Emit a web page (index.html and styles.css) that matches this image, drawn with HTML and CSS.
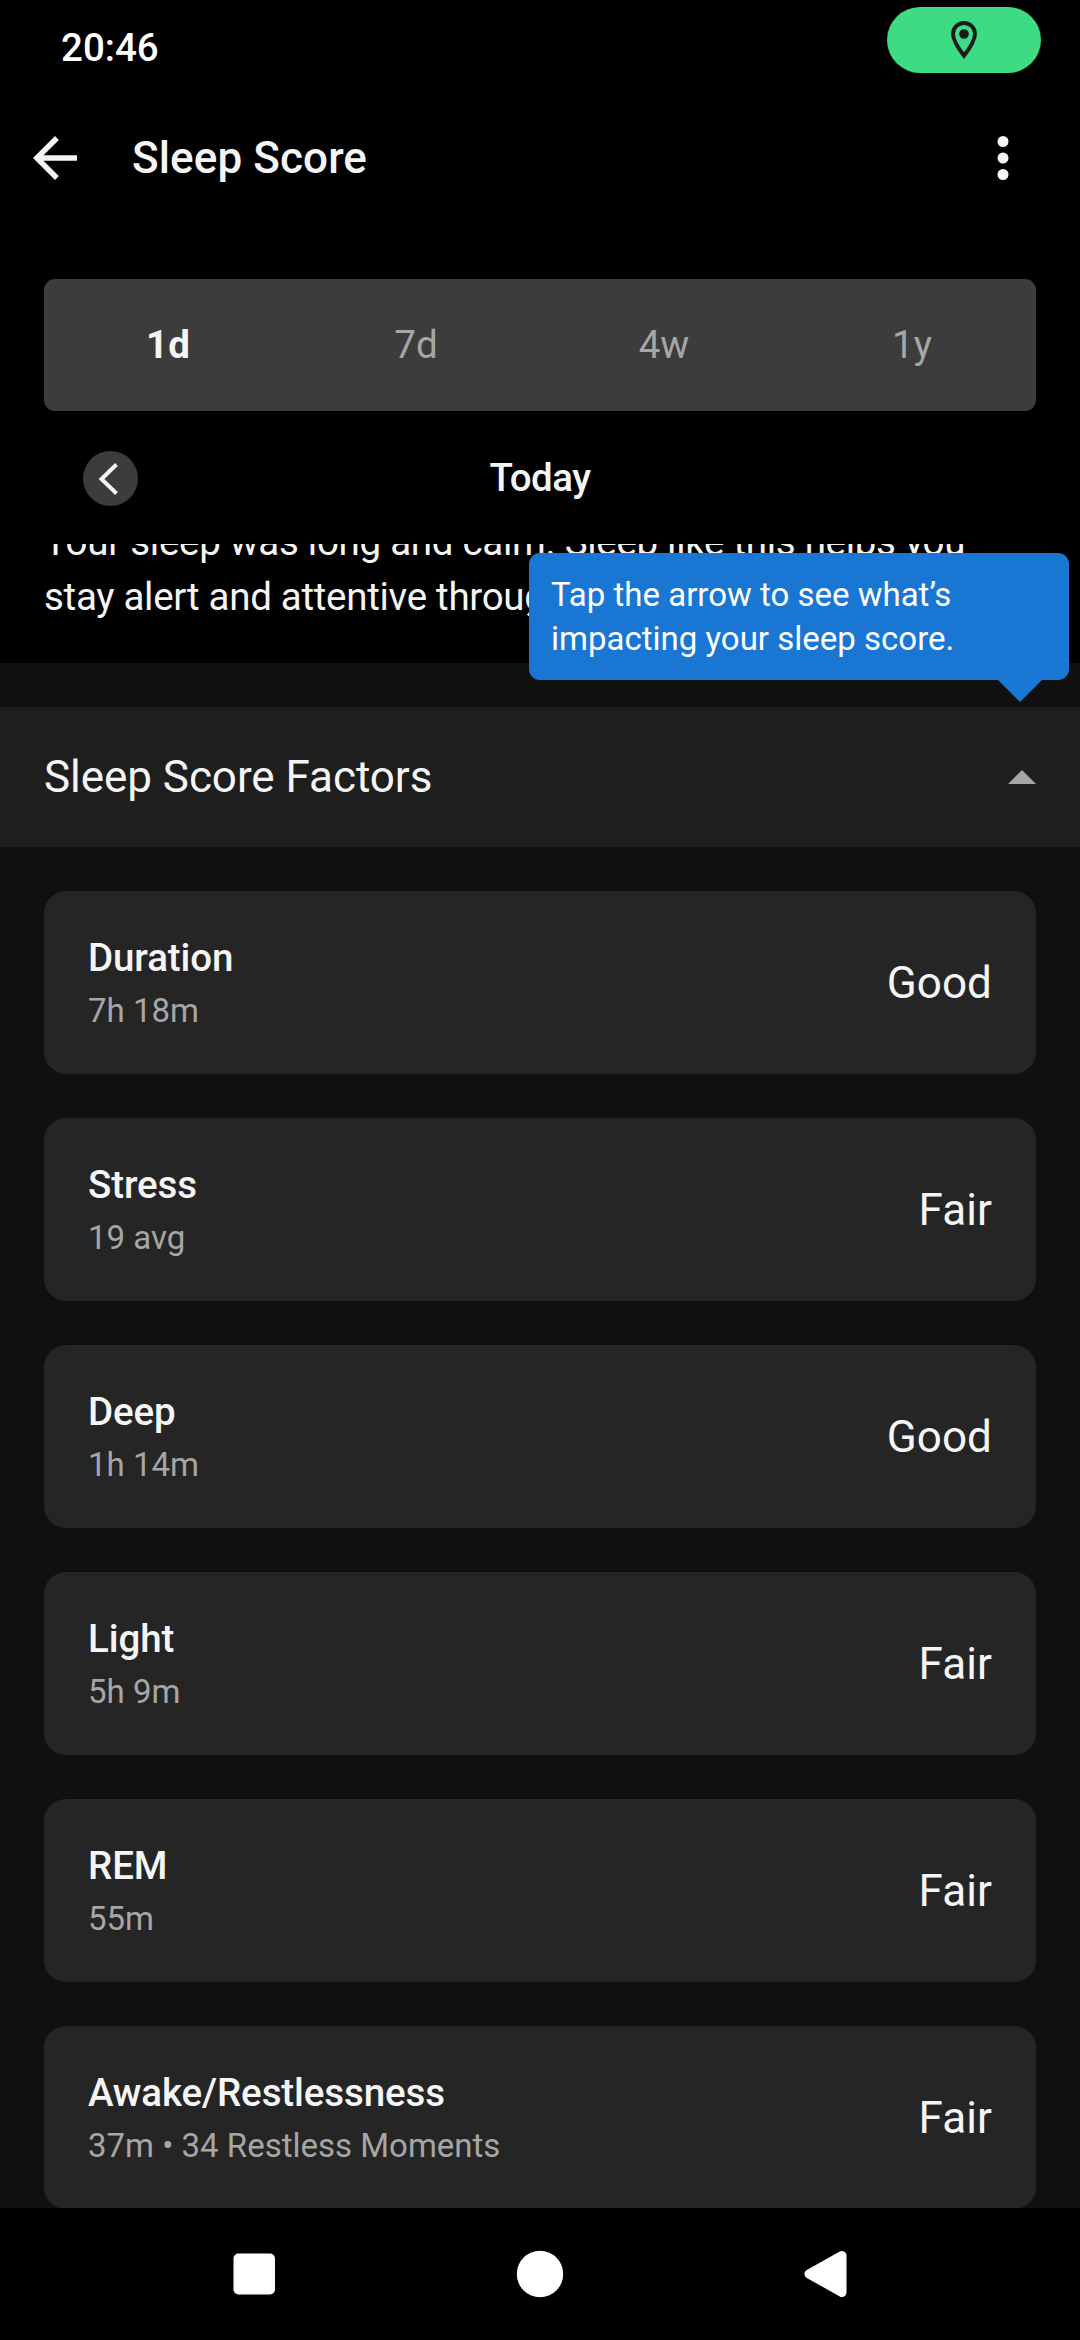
FILE: index.html
```html
<!DOCTYPE html>
<html lang="en">
<head>
<meta charset="utf-8">
<title>Sleep Score</title>
<link rel="stylesheet" href="styles.css">
</head>
<body>
<div class="screen">
  <div class="status-bar">
    <span class="clock">20:46</span>
    <span class="location-pill">
      <svg class="pin" viewBox="0 0 26 38" width="26" height="38">
        <path d="M13 2C6.9 2 2 6.9 2 13C2 20 7.5 27.5 13 34.7C18.500 27.500 24 20 24 13C24 6.900 19.100 2 13 2Z" fill="none" stroke="#1b1b1f" stroke-width="3.900"/>
        <circle cx="13" cy="13" r="4.800" fill="#1b1b1f"/>
      </svg>
    </span>
  </div>

  <header class="app-bar">
    <svg class="back" viewBox="0 0 24 24" width="66" height="66"><path d="M20 11H7.830l5.590-5.590L12 4l-8 8 8 8 1.410-1.410L7.830 13H20z" fill="#f5f5f5"/></svg>
    <h1 class="title">Sleep Score</h1>
    <svg class="more" viewBox="0 0 24 24" width="66" height="66"><g fill="#f5f5f5"><circle cx="12" cy="6" r="2"/><circle cx="12" cy="12" r="2"/><circle cx="12" cy="18" r="2"/></g></svg>
  </header>

  <nav class="ranges">
    <span class="range active">1d</span>
    <span class="range">7d</span>
    <span class="range">4w</span>
    <span class="range">1y</span>
  </nav>

  <div class="date-row">
    <span class="prev">
      <svg viewBox="0 0 55 55" width="55" height="55"><path d="M33.500 13.500L18.500 28L33.500 42.500" fill="none" stroke="#f5f5f5" stroke-width="4"/></svg>
    </span>
    <span class="date">Today</span>
  </div>

  <main class="content">
    <div class="summary">
      <p class="summary-text">Your sleep was long and calm. Sleep like this helps you<br>stay alert and attentive throughout the day.</p>
    </div>
    <section class="section-header">
      <h2 class="section-title">Sleep Score Factors</h2>
      <svg class="caret" viewBox="0 0 28 14" width="28" height="14"><path d="M0 14L14 0L28 14Z" fill="#a6a6a6"/></svg>
      <div class="tooltip">Tap the arrow to see what’s<br>impacting your sleep score.</div>
    </section>
    <div class="cards">
      <div class="card"><div class="info"><span class="label">Duration</span><span class="detail">7h 18m</span></div><span class="rating">Good</span></div>
      <div class="card"><div class="info"><span class="label">Stress</span><span class="detail">19 avg</span></div><span class="rating">Fair</span></div>
      <div class="card"><div class="info"><span class="label">Deep</span><span class="detail">1h 14m</span></div><span class="rating">Good</span></div>
      <div class="card"><div class="info"><span class="label">Light</span><span class="detail">5h 9m</span></div><span class="rating">Fair</span></div>
      <div class="card"><div class="info"><span class="label">REM</span><span class="detail">55m</span></div><span class="rating">Fair</span></div>
      <div class="card"><div class="info"><span class="label">Awake/Restlessness</span><span class="detail">37m • 34 Restless Moments</span></div><span class="rating">Fair</span></div>
    </div>
  </main>

  <footer class="nav-bar">
    <svg viewBox="0 0 48 48" width="48" height="48"><rect x="3.500" y="3.500" width="41.500" height="41" rx="5" fill="#fff"/></svg>
    <svg viewBox="0 0 48 48" width="48" height="48"><circle cx="24" cy="24" r="23.200" fill="#fff"/></svg>
    <svg viewBox="0 0 48 48" width="48" height="48"><path d="M7 24L40 5.500V42.500Z" fill="#fff" stroke="#fff" stroke-width="9" stroke-linejoin="round"/></svg>
  </footer>
</div>
</body>
</html>
```
FILE: styles.css
```css
* { box-sizing: border-box; margin: 0; padding: 0; }
body { background: #000; font-family: Roboto, sans-serif; color: #f5f5f5; }
svg { display: block; flex: none; }

.screen {
  width: 1080px;
  height: 2340px;
  display: flex;
  flex-direction: column;
  overflow: hidden;
  background: #000;
}

.status-bar {
  height: 92px;
  flex: none;
  display: flex;
  justify-content: space-between;
  align-items: flex-start;
  padding: 7px 39px 0 61px;
}
.clock { font-size: 38.5px; font-weight: 500; line-height: 82px; color: #fff; }
.location-pill {
  width: 154px;
  height: 66px;
  border-radius: 33px;
  background: #3ddc84;
  display: flex;
  justify-content: center;
  padding-top: 14px;
}

.app-bar {
  height: 132px;
  flex: none;
  display: flex;
  align-items: center;
  padding: 0 44px 0 22px;
}
.title { flex: 1; margin-left: 44px; font-size: 44px; font-weight: 500; letter-spacing: 0.1px; }

.ranges {
  height: 132px;
  flex: none;
  margin: 55px 44px 0;
  border-radius: 11px;
  background: #3c3c3c;
  display: flex;
}
.range { flex: 1; text-align: center; font-size: 38.5px; line-height: 132px; color: #a6a6a6; }
.range.active { font-weight: 700; color: #f5f5f5; }

.date-row {
  height: 133px;
  flex: none;
  display: grid;
  grid-template-columns: 55px 1fr 55px;
  align-items: center;
  padding: 1px 83px 0;
}
.prev { border-radius: 50%; background: #3c3c3c; }
.date { padding-bottom: 2px; text-align: center; font-size: 38.5px; font-weight: 500; letter-spacing: -0.5px; }

.content { height: 1664px; flex: none; overflow: hidden; background: #101010; }
.summary {
  height: 119px;
  background: #000;
  padding: 0 44px;
  display: flex;
  align-items: flex-end;
}
.summary-text {
  padding-bottom: 39px;
  font-size: 38.5px;
  line-height: 55px;
  letter-spacing: -0.29px;
  white-space: nowrap;
}

.section-header {
  position: relative;
  height: 140px;
  margin-top: 44px;
  padding: 0 44px;
  background: #1e1e1e;
  display: flex;
  align-items: center;
  justify-content: space-between;
}
.section-title { font-size: 44px; font-weight: 400; letter-spacing: -0.05px; }

.tooltip {
  position: absolute;
  right: 11px;
  bottom: 167px;
  width: 540px;
  height: 127px;
  padding: 20px 22px 0;
  border-radius: 11px;
  background: #1976d2;
  color: #fff;
  font-size: 33px;
  line-height: 44px;
}
.tooltip::after {
  content: "";
  position: absolute;
  top: 127px;
  right: 27px;
  border: 22px solid transparent;
  border-top: 22px solid #1976d2;
  border-bottom: 0;
}

.cards { padding: 44px 44px 0; display: flex; flex-direction: column; gap: 44px; }
.card {
  height: 183px;
  padding: 0 44px;
  border-radius: 22px;
  background: #252525;
  display: flex;
  align-items: center;
  justify-content: space-between;
}
.info { display: flex; flex-direction: column; gap: 11px; }
.label { font-size: 38.5px; font-weight: 500; line-height: 45px; letter-spacing: -0.1px; }
.detail { font-size: 33px; line-height: 39px; color: #a6a6a6; }
.rating { font-size: 44px; line-height: 52px; letter-spacing: 0.1px; }

.nav-bar {
  flex: 1;
  display: flex;
  justify-content: center;
  gap: 238px;
  padding-top: 42px;
}
```
